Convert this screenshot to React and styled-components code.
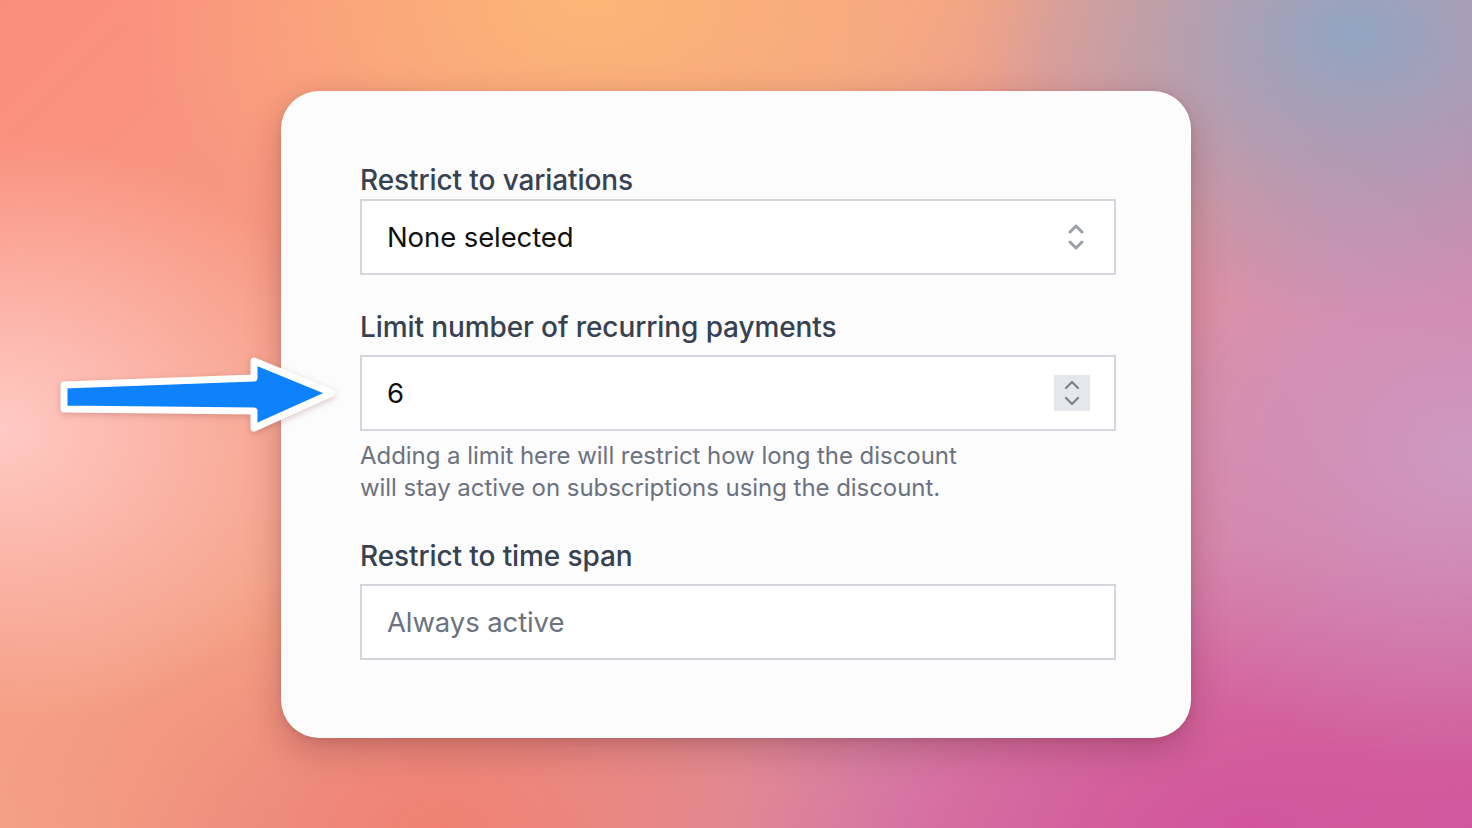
import React from 'react'
import styled, { createGlobalStyle } from 'styled-components'

const GlobalStyle = createGlobalStyle`
  html, body {
    margin: 0;
    padding: 0;
    height: 100%;
  }
  body {
    font-family: Inter, "Noto Sans", "Liberation Sans", sans-serif;
    overflow: hidden;
  }
  #root {
    height: 100%;
  }
`

const Backdrop = styled.div`
  position: relative;
  width: 100vw;
  height: 100vh;
  display: flex;
  align-items: center;
  justify-content: center;
  background:
    radial-gradient(ellipse 520px 420px at 0% 52%, rgba(255, 205, 200, 0.95), rgba(255, 205, 200, 0) 70%),
    radial-gradient(ellipse 620px 380px at 40% 0%, rgba(252, 184, 118, 0.95), rgba(252, 184, 118, 0) 75%),
    radial-gradient(ellipse 520px 380px at 92% 4%, rgba(140, 166, 196, 0.95), rgba(140, 166, 196, 0) 75%),
    radial-gradient(ellipse 520px 420px at 100% 55%, rgba(206, 156, 196, 0.95), rgba(206, 156, 196, 0) 75%),
    radial-gradient(ellipse 700px 380px at 85% 100%, rgba(210, 84, 156, 0.95), rgba(210, 84, 156, 0) 75%),
    radial-gradient(ellipse 600px 360px at 30% 100%, rgba(240, 128, 112, 0.95), rgba(240, 128, 112, 0) 75%),
    linear-gradient(135deg, #fb8d7c 0%, #f3a386 40%, #d98aa4 70%, #d05c9c 100%);
`

const Card = styled.div`
  width: 910px;
  box-sizing: border-box;
  padding: 73px 75px 78px 79px;
  background: #fcfcfc;
  border-radius: 38px;
  box-shadow: 0 12px 34px rgba(90, 30, 40, 0.28), 0 2px 6px rgba(90, 30, 40, 0.12);
  display: flex;
  flex-direction: column;
`

const Field = styled.div`
  display: flex;
  flex-direction: column;
  margin-top: ${p => (p.$first ? '0' : '36px')};
`

const Label = styled.label`
  font-size: 28px;
  line-height: 32px;
  font-weight: 500;
  color: #364152;
  margin-bottom: ${p => (p.$tight ? '3px' : '12px')};
  letter-spacing: -0.1px;
`

const InputBox = styled.div`
  position: relative;
  height: 76px;
  box-sizing: border-box;
  border: 2px solid #d3d6dc;
  background: #ffffff;
  display: flex;
  align-items: center;
  justify-content: space-between;
  padding: 0 24px 0 25px;
`

const Value = styled.span`
  font-size: 27.5px;
  color: ${p => (p.$muted ? '#6b7280' : '#111111')};
  letter-spacing: -0.1px;
`

const SelectChevrons = styled.span`
  display: flex;
  align-items: center;
  justify-content: center;
  width: 24px;
  height: 36px;
  margin-right: 2px;
`

const Stepper = styled.span`
  display: flex;
  align-items: center;
  justify-content: center;
  width: 36px;
  height: 36px;
  background: #e6e7eb;
`

const Help = styled.p`
  margin: 9px 0 0;
  font-size: 24px;
  line-height: 32px;
  color: #6b7280;
  letter-spacing: -0.05px;
`

const ArrowMark = styled.svg`
  position: absolute;
  left: 52px;
  top: 350px;
  width: 292px;
  height: 90px;
  filter: drop-shadow(0 2px 3px rgba(120, 40, 40, 0.25));
`

function UpDown({ color, width }) {
  return (
    <svg width="20" height="30" viewBox="0 0 20 30" fill="none">
      <path d="M4 10 L10 4 L16 10" stroke={color} strokeWidth={width} strokeLinecap="round" strokeLinejoin="round" />
      <path d="M4 20 L10 26 L16 20" stroke={color} strokeWidth={width} strokeLinecap="round" strokeLinejoin="round" />
    </svg>
  )
}

function App() {
  return (
    <Backdrop>
      <GlobalStyle />
      <Card>
        <Field $first>
          <Label $tight>Restrict to variations</Label>
          <InputBox>
            <Value>None selected</Value>
            <SelectChevrons>
              <UpDown color="#9aa0ab" width={3} />
            </SelectChevrons>
          </InputBox>
        </Field>

        <Field>
          <Label>Limit number of recurring payments</Label>
          <InputBox>
            <Value>6</Value>
            <Stepper>
              <UpDown color="#7b808c" width={2.2} />
            </Stepper>
          </InputBox>
          <Help>
            Adding a limit here will restrict how long the discount
            <br />
            will stay active on subscriptions using the discount.
          </Help>
        </Field>

        <Field>
          <Label>Restrict to time span</Label>
          <InputBox>
            <Value $muted>Always active</Value>
          </InputBox>
        </Field>
      </Card>

      <ArrowMark viewBox="0 0 292 90">
        <path
          d="M12 35 L202 28 L202 11 L280 43 L202 78 L202 61 L12 59 Z"
          fill="#0d82fb"
          stroke="#ffffff"
          strokeWidth="7"
          strokeLinejoin="round"
        />
      </ArrowMark>
    </Backdrop>
  )
}

export default App
